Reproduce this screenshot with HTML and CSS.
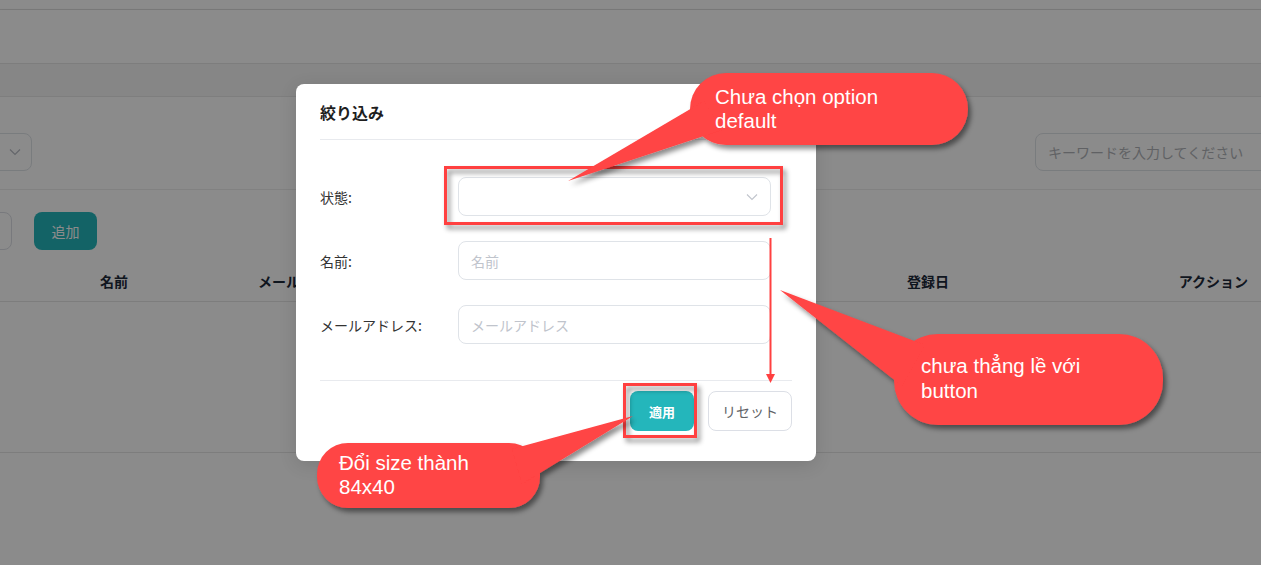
FILE: index.html
```html
<!DOCTYPE html>
<html lang="ja">
<head>
  <meta charset="UTF-8">
  <meta name="viewport" content="width=device-width, initial-scale=1.0">
  <title>絞り込み</title>
  <link rel="stylesheet" href="styles.css">
</head>
<body>
  <div class="page">
    <div class="topline"></div>
    <header class="navbar"></header>
    <div class="crumbs"></div>

    <!-- filter row -->
    <section class="filters">
      <div class="field select-field bg-select">
        <svg class="chevron" width="12" height="8" viewBox="0 0 12 8"><polyline points="1,1.5 6,6.5 11,1.5" fill="none" stroke="#b8bcc4" stroke-width="1.2"/></svg>
      </div>
      <div class="field search">キーワードを入力してください</div>
    </section>

    <!-- toolbar and table -->
    <section class="list">
      <div class="toolbar">
        <button class="btn ghost cut"></button>
        <button class="btn primary add">追加</button>
      </div>
      <div class="table-head">
        <div class="col col-name">名前</div>
        <div class="col col-mail">メールアドレス</div>
        <div class="col col-date">登録日</div>
        <div class="col col-action">アクション</div>
      </div>
      <div class="table-body"></div>
    </section>
  </div>

  <div class="overlay"></div>

  <!-- filter dialog -->
  <div class="modal">
    <div class="modal-header">絞り込み</div>
    <div class="modal-body">
      <div class="form-row">
        <label class="form-label">状態:</label>
        <div class="field select-field">
          <svg class="chevron" width="12" height="8" viewBox="0 0 12 8"><polyline points="1,1.5 6,6.5 11,1.5" fill="none" stroke="#c0c4cc" stroke-width="1.1"/></svg>
        </div>
      </div>
      <div class="form-row">
        <label class="form-label">名前:</label>
        <div class="field">名前</div>
      </div>
      <div class="form-row">
        <label class="form-label">メールアドレス:</label>
        <div class="field">メールアドレス</div>
      </div>
    </div>
    <div class="modal-footer">
      <button class="btn primary apply">適用</button>
      <button class="btn ghost reset">リセット</button>
    </div>
  </div>

  <!-- review annotations -->
  <svg class="notes" width="1261" height="565" viewBox="0 0 1261 565">
    <defs>
      <filter id="shadow" x="-20%" y="-20%" width="140%" height="160%">
        <feDropShadow dx="3" dy="4" stdDeviation="2.5" flood-color="#000" flood-opacity="0.45"/>
      </filter>
    </defs>

    <!-- boxes and arrow -->
    <g filter="url(#shadow)" fill="none" stroke="#ff4040" stroke-width="3">
      <rect x="445.5" y="167.5" width="336" height="56"/>
      <rect x="624.5" y="384.5" width="71" height="52"/>
    </g>
    <line x1="770.5" y1="238" x2="770.5" y2="376" stroke="#ff4040" stroke-width="2"/>
    <polygon points="766,374 775,374 770.5,383" fill="#ff4040"/>

    <!-- callouts -->
    <g filter="url(#shadow)" fill="#ff4444">
      <rect x="690" y="73" width="278" height="72" rx="36"/>
      <polygon points="704,101 568,181 722,130"/>
      <rect x="894" y="334" width="269" height="91" rx="44"/>
      <polygon points="780,290 925,345 902,386"/>
      <rect x="317" y="443" width="223" height="65" rx="31"/>
      <polygon points="633,416 512,449 522,484"/>
    </g>

    <g class="note-text">
      <text x="715" y="104">Chưa chọn option</text>
      <text x="715" y="128">default</text>
      <text x="921" y="373">chưa thẳng lề với</text>
      <text x="921" y="398">button</text>
      <text x="339" y="470">Đổi size thành</text>
      <text x="339" y="494">84x40</text>
    </g>
  </svg>
</body>
</html>
```

FILE: styles.css
```css
body {
  margin: 0;
  position: relative;
  width: 1261px;
  height: 565px;
  overflow: hidden;
  background-color: #ffffff;
  font-family: "Noto Sans CJK JP", "Noto Sans", sans-serif;
  font-size: 14px;
  color: #333;
}

.page {
  display: flex;
  flex-direction: column;
}

.topline {
  height: 9px;
  border-bottom: 1px solid #e2e2e2;
}

.navbar {
  height: 53px;
  box-shadow: 0 1px 3px rgba(0, 0, 0, 0.12);
  border-bottom: 1px solid #e6e6e6;
}

.crumbs {
  height: 32px;
  background-color: #f6f6f6;
  border-bottom: 1px solid #e8e8e8;
}

/* Filter row */
.filters {
  height: 93px;
  padding-top: 36px;
  box-sizing: border-box;
  display: flex;
  justify-content: space-between;
  border-bottom: 1px solid #ececec;
}

.field {
  box-sizing: border-box;
  height: 40px;
  border: 1px solid #dfe3e8;
  border-radius: 8px;
  background: #fff;
  padding: 0 12px;
  display: flex;
  align-items: center;
  color: #c0c4cc;
  font-size: 14px;
}

.select-field {
  justify-content: flex-end;
}

.bg-select {
  width: 200px;
  height: 38px;
  margin-left: -168px;
  padding-right: 10px;
}

.search {
  width: 250px;
  height: 38px;
  margin-right: -24px;
  color: #b0b3b8;
}

/* Toolbar + table */
.toolbar {
  display: flex;
  gap: 22px;
  padding-top: 22px;
}

.btn {
  box-sizing: border-box;
  height: 40px;
  border-radius: 8px;
  font-family: "Noto Sans CJK JP", "Noto Sans", sans-serif;
  font-size: 14px;
  cursor: pointer;
}

.btn.primary {
  background-color: #24b6bb;
  border: none;
  color: #fff;
}

.btn.ghost {
  background-color: #fff;
  border: 1px solid #dcdfe6;
  color: #606266;
}

.cut {
  width: 80px;
  height: 38px;
  margin-left: -68px;
}

.add {
  width: 63px;
  height: 38px;
}

.table-head {
  display: grid;
  grid-template-columns: 228px 1fr 200px 233px;
  height: 40px;
  margin-top: 11px;
  align-items: center;
  border-bottom: 1px solid #e6e6e6;
  font-weight: bold;
  color: #1d2939;
}

.col-name { text-align: center; }
.col-mail { padding-left: 30px; }
.col-date { text-align: center; }
.col-action { text-align: right; padding-right: 13px; }

.table-body {
  height: 150px;
  border-bottom: 1px solid #e6e6e6;
}

.overlay {
  position: absolute;
  inset: 0;
  background-color: rgba(0, 0, 0, 0.455);
}

/* Dialog */
.modal {
  position: absolute;
  left: 296px;
  top: 84px;
  width: 520px;
  padding: 0 24px;
  box-sizing: border-box;
  background: #fff;
  border-radius: 8px;
  box-shadow: 0 4px 18px rgba(0, 0, 0, 0.12);
}

.modal-header {
  height: 55px;
  display: flex;
  align-items: center;
  border-bottom: 1px solid #e8eaee;
  font-size: 16px;
  font-weight: bold;
  color: #1f1f1f;
}

.modal-body {
  display: flex;
  flex-direction: column;
  gap: 25px;
  padding: 37px 0 36px;
}

.form-row {
  display: flex;
  align-items: center;
}

.form-label {
  width: 138px;
  flex-shrink: 0;
  color: #333;
}

.form-row .field {
  width: 313px;
  height: 39px;
}

.modal-footer {
  display: flex;
  justify-content: flex-end;
  gap: 14px;
  padding: 10px 0 30px;
  border-top: 1px solid #e8eaee;
}

.apply {
  width: 64px;
  font-size: 13px;
  font-weight: bold;
}

.reset {
  width: 84px;
}

/* Review annotations */
.notes {
  position: absolute;
  left: 0;
  top: 0;
  pointer-events: none;
}

.note-text text {
  fill: #fff;
  font-family: "Liberation Sans", Arial, sans-serif;
  font-size: 20.5px;
}
```
